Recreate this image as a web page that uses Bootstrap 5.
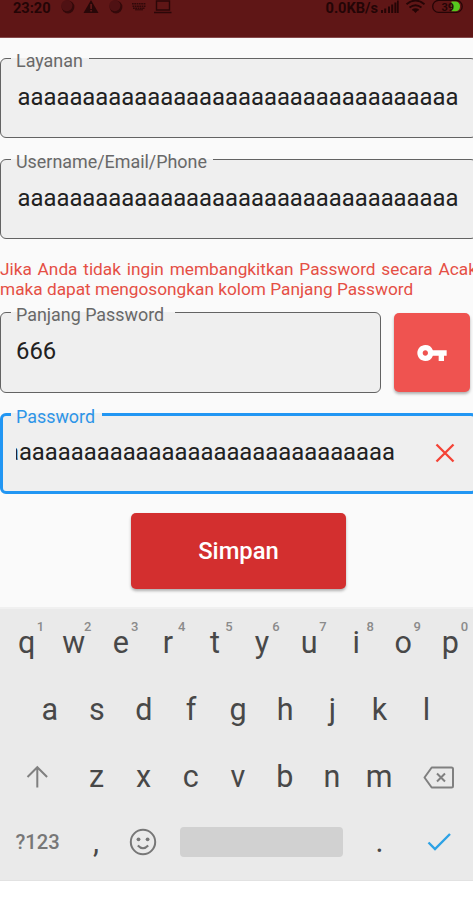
<!DOCTYPE html>
<html lang="id">
<head>
<meta charset="utf-8">
<meta name="viewport" content="width=device-width, initial-scale=1">
<title>Simpan Password</title>
<link href="https://cdn.jsdelivr.net/npm/bootstrap@5.3.0/dist/css/bootstrap.min.css" rel="stylesheet">
<style>
html,body{height:901px;overflow:hidden}
body{font-family:Roboto,"Liberation Sans",sans-serif;background:#fff;color:#212121}
svg{display:block;flex:none}
.status{height:38px;background:#5f1616;border-bottom:1px solid #85494b;color:#230506;font-weight:700;font-size:14.6px;line-height:16px;padding-left:13px}
.page{height:569px;background:#fafafa;overflow:hidden}
.field{width:477px;height:88px;border:1px solid #636363;border-radius:6px;background:#efefef;padding:0 15px;min-width:0}
.field legend{float:none;height:16px;margin:0 0 0 -5px;padding:0 0 0 5px;font-size:17.9px;line-height:22px;color:#686868;white-space:nowrap}
.field .value{font-size:23.85px;line-height:30px;white-space:nowrap;padding-top:16px}
.field .inset{padding-left:1.5px}
.f-service{margin-top:12px}
.f-user{margin-top:13px}
.f-length{width:381px;height:89px}
.f-service legend{width:78px}
.f-user legend{width:202px;line-height:21px}
.f-length legend{width:164px}
.field.focused{border:3px solid #2196f3;height:87.5px;padding:0 13px;margin-top:13px}
.field.focused legend{color:#2d95e8;width:91px;line-height:21px}
.field.focused .value{padding-top:15px;padding-bottom:1px}
.clip{width:379px;overflow:hidden}
.clear{margin:16px 0 0 40px}
.hint{width:477px;margin-top:20px;font-size:17.25px;line-height:20px;color:#e54f45;white-space:nowrap}
.hint .spread{word-spacing:1.5px}
.length-row{margin-top:5px}
.btn-key,.btn-save{border:0;border-radius:5px;box-shadow:0 2px 3px rgba(0,0,0,.3);color:#fff}
.btn-key,.btn-key:hover{width:76px;height:79px;margin:9px 0 0 13px;background:#ef5350}
.btn-save,.btn-save:hover{width:215px;height:76px;margin:19.5px 0 0 131px;padding:8px 0 6px;background:#d32f2f;color:#fff;font-size:23.8px;font-weight:500}
.kb{height:274px;background:#eaeaea;border-top:2px solid #f0f0f0;border-bottom:1px solid #e2e2e2;color:#484848;overflow:hidden}
.krow{height:66.7px}
.key{width:47.1px;flex:none;text-align:center;font-size:30.5px;line-height:68px;position:relative}
.row-three .key{line-height:70px}
.key sup{position:absolute;left:37.5px;top:11px;font-size:13px;line-height:13px;font-weight:500;color:#8b8b8b;transform:translateX(-50%)}
.sym{width:75px;text-align:center;font-size:20.2px;font-weight:500;color:#777;line-height:67px}
.comma{width:42px}
.dot{width:74px}
.space{width:162.5px;height:30px;margin-left:23px;border-radius:4px;background:#d1d1d1}
.row-one{padding-left:3px}
.row-two{padding-left:26.2px}
.smile{margin-left:12px}
.done{margin-left:9px}
</style>
</head>
<body>
<header class="status d-flex align-items-start">
  <span>23:20</span>
  <svg width="124" height="15" viewBox="0 0 124 15" fill="#280708">
    <circle cx="17" cy="7" r="6.4" fill="#33090a"/><circle cx="15.8" cy="5.6" r="5.6" fill="#4f1113"/>
    <path d="M40 0 47.5 13H32.5Z"/><path d="M39.3 4h1.6v5h-1.6zM39.3 10h1.6v1.6h-1.6z" fill="#641a1a"/>
    <circle cx="65" cy="7" r="6.4" fill="#33090a"/><circle cx="63.8" cy="5.6" r="5.6" fill="#4f1113"/>
    <path d="M81 3.8h14M81.5 6.2h13M82 8.3h12" stroke="#300809" stroke-width="1.5" stroke-dasharray="1.7 .6"/><path d="M84 9.8h8" stroke="#300809"/>
    <path d="M105.5 1h13v9h-13zM103 12.5h17.5" fill="none" stroke="#2b0708" stroke-width="1.4"/>
  </svg>
  <span class="ms-auto">0.0KB/s</span>
  <svg width="95" height="15" viewBox="378 0 95 15" fill="#250506">
    <path d="M381 10h2v3h-2zM384.2 8.6h2V13h-2zM388 6.5h2V13h-2zM391.2 4.5h2V13h-2zM394.4 2.5h2V13h-2zM397 .5h1.7V13H397z"/>
    <g fill="none" stroke="#250506" stroke-width="1.9"><path d="M406.5 4.2q9-7.2 18 0M409.5 7.5q6-4.6 12 0M412.4 10.3q3-2 6.2 0"/></g><path d="m413.2 10.5 2.3 2.5 2.3-2.500q-2.3-1.5-4.6 0z"/>
    <rect x="432.7" y=".4" width="29.5" height="12" rx="6" fill="none" stroke="#250506" stroke-width="1.3"/>
    <path d="M451.5 1.500h4.500a5 5 0 0 1 0 9.800h-4.500z" fill="#57c81e"/>
    <text x="441.5" y="10.500" font-size="11" font-weight="700">39</text>
  </svg>
</header>
<main class="page d-flex flex-column">
  <fieldset class="field f-service flex-shrink-0"><legend>Layanan</legend><div class="value inset">aaaaaaaaaaaaaaaaaaaaaaaaaaaaaaaaaa</div></fieldset>
  <fieldset class="field f-user flex-shrink-0"><legend>Username/Email/Phone</legend><div class="value inset">aaaaaaaaaaaaaaaaaaaaaaaaaaaaaaaaaa</div></fieldset>
  <div class="hint flex-shrink-0"><div class="spread">Jika Anda tidak ingin membangkitkan Password secara Acak</div><div>maka dapat mengosongkan kolom Panjang Password</div></div>
  <div class="length-row d-flex flex-shrink-0">
    <fieldset class="field f-length"><legend>Panjang Password</legend><div class="value">666</div></fieldset>
    <button class="btn btn-key p-0 d-flex align-items-center justify-content-center" aria-label="Acak">
      <svg width="32" height="32" viewBox="0 0 24 24" fill="#fff"><path d="M12.65 10A5.99 5.99 0 0 0 7 6c-3.310 0-6 2.690-6 6s2.690 6 6 6a5.990 5.990 0 0 0 5.650-4H17v4h4v-4h2v-4H12.650zM7 14c-1.100 0-2-.9-2-2s.9-2 2-2 2 .9 2 2-.9 2-2 2z"/></svg>
    </button>
  </div>
  <fieldset class="field focused flex-shrink-0"><legend>Password</legend>
    <div class="d-flex align-items-center"><div class="value clip d-flex justify-content-end"><span>aaaaaaaaaaaaaaaaaaaaaaaaaaaaaa</span></div>
    <svg class="clear" width="20" height="20" viewBox="0 0 20 20"><path d="m1.5 1.500 17 17m0-17-17 17" stroke="#f44336" stroke-width="2.3"/></svg></div>
  </fieldset>
  <button class="btn btn-save flex-shrink-0">Simpan</button>
</main>
<section class="kb" aria-label="Keyboard">
  <div class="krow row-one d-flex"><div class="key">q<sup>1</sup></div><div class="key">w<sup>2</sup></div><div class="key">e<sup>3</sup></div><div class="key">r<sup>4</sup></div><div class="key">t<sup>5</sup></div><div class="key">y<sup>6</sup></div><div class="key">u<sup>7</sup></div><div class="key">i<sup>8</sup></div><div class="key">o<sup>9</sup></div><div class="key">p<sup>0</sup></div></div>
  <div class="krow row-two d-flex"><div class="key">a</div><div class="key">s</div><div class="key">d</div><div class="key">f</div><div class="key">g</div><div class="key">h</div><div class="key">j</div><div class="key">k</div><div class="key">l</div></div>
  <div class="krow row-three d-flex">
    <svg width="73" height="66" viewBox="0 0 73 66" fill="none" stroke="#808080" stroke-width="2"><path d="M37.3 45.500V25.500M27.500 35l9.800-9.800 9.800 9.800"/></svg>
    <div class="key">z</div><div class="key">x</div><div class="key">c</div><div class="key">v</div><div class="key">b</div><div class="key">n</div><div class="key">m</div>
    <svg width="70" height="66" viewBox="0 0 70 66" fill="none" stroke="#808080" stroke-width="2"><path d="M28.7 25.500H48.500q1.500 0 1.500 1.500v17q0 1.500-1.500 1.500H28.700L21.500 35.500zM34 31.500l8 8m0-8-8 8" stroke-linejoin="round"/></svg>
  </div>
  <div class="krow d-flex align-items-center"><div class="sym">?123</div><div class="key comma">,</div>
    <svg class="smile" width="28" height="28" viewBox="0 0 28 28" fill="none" stroke="#777" stroke-width="2"><circle cx="14" cy="14" r="12.2"/><path d="M8.8 17.500q5.200 5.500 10.400 0"/><circle cx="9.5" cy="11.3" r="1.9" fill="#777" stroke="none"/><circle cx="18.6" cy="11.3" r="1.9" fill="#777" stroke="none"/></svg>
    <div class="space"></div>
    <div class="key dot">.</div>
    <svg class="done" width="26" height="22" viewBox="0 0 26 22"><path d="m2.5 11.500 6.500 6.500L24 3" fill="none" stroke="#2da2e5" stroke-width="2.4"/></svg>
  </div>
</section>
<script src="https://cdn.jsdelivr.net/npm/bootstrap@5.3.0/dist/js/bootstrap.bundle.min.js"></script>
</body>
</html>
